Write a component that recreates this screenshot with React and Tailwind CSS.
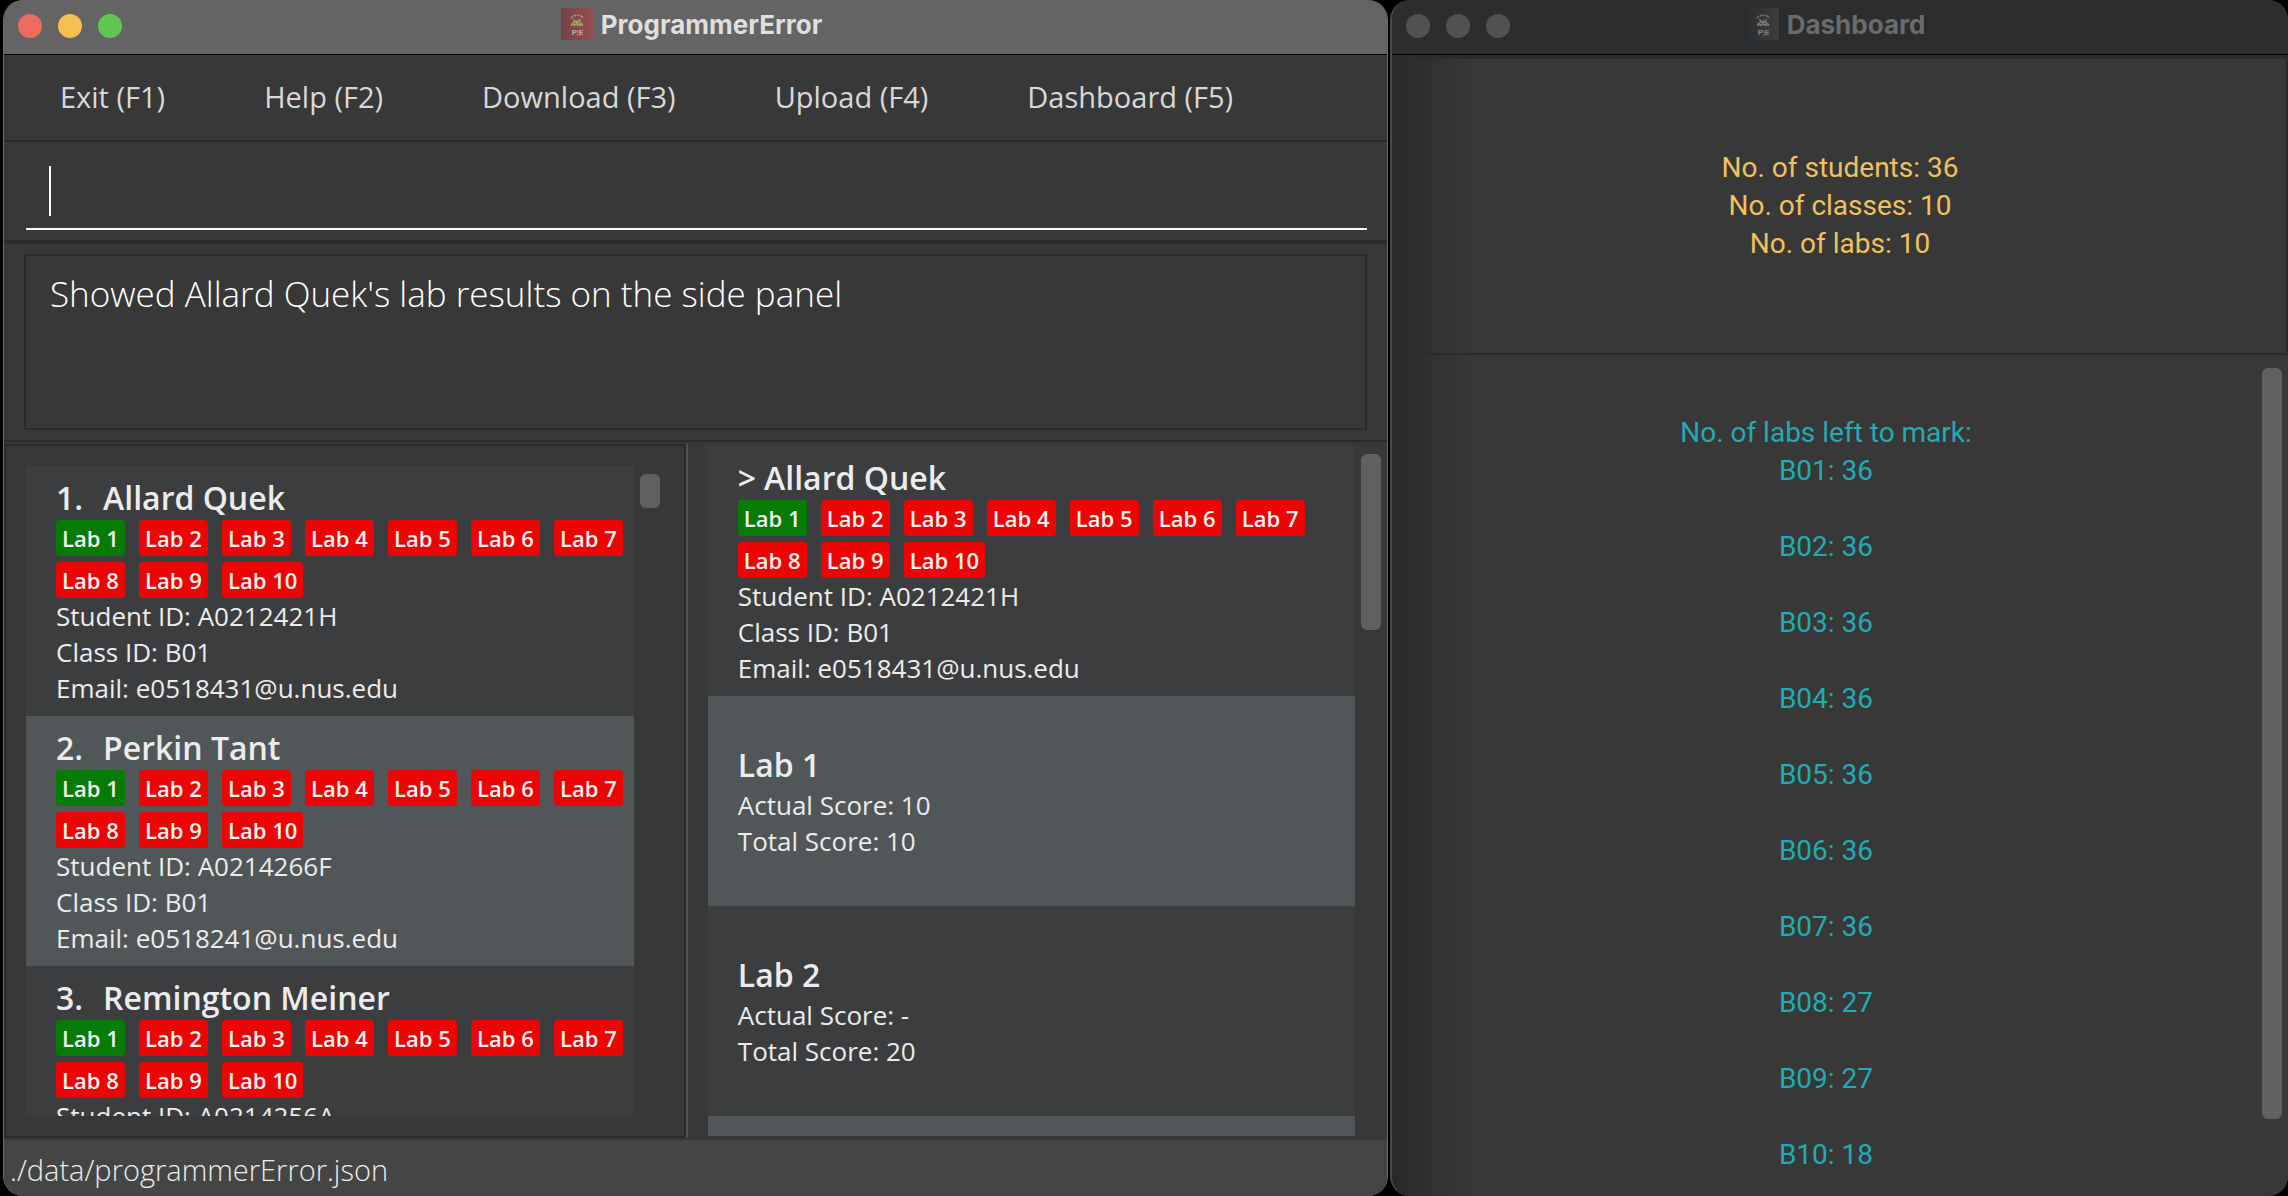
import React from "react";

const STUDENTS = [
  { name: "Allard Quek", id: "A0212421H", classId: "B01", email: "e0518431@u.nus.edu" },
  { name: "Perkin Tant", id: "A0214266F", classId: "B01", email: "e0518241@u.nus.edu" },
  { name: "Remington Meiner", id: "A0214256A" },
];

const LABS = [
  { name: "Lab 1", actual: "10", total: "10" },
  { name: "Lab 2", actual: "-", total: "20" },
];

const TAGS = [1, 2, 3, 4, 5, 6, 7, 8, 9, 10];
const MENU = ["Exit (F1)", "Help (F2)", "Download (F3)", "Upload (F4)", "Dashboard (F5)"];
const UNMARKED = [
  ["B01", 36],
  ["B02", 36],
  ["B03", 36],
  ["B04", 36],
  ["B05", 36],
  ["B06", 36],
  ["B07", 36],
  ["B08", 27],
  ["B09", 27],
  ["B10", 18],
];

function Logo({ id, from, to, alien, ink }) {
  return (
    <svg viewBox="0 0 32 32" className="size-8 shrink-0" aria-hidden="true">
      <defs>
        <linearGradient id={id} x1="0" y1="0" x2="1" y2="0">
          <stop offset="0" stopColor={from} />
          <stop offset="1" stopColor={to} />
        </linearGradient>
      </defs>
      <rect width="32" height="32" fill={`url(#${id})`} />
      <path d="M10 10 Q16 4.5 23 10" fill="none" stroke={ink} strokeWidth="1.6" strokeDasharray="2 1 3 1" opacity="0.75" />
      <path
        fill={alien}
        d="M12 11h1.5v1.5h5V11H20v1.5h-1V14h1.5v1.5H22v2.5h-1.5v-1h-1v1.5H18V17.500h-4v1h-1.500V17h-1v1H10v-2.500h1.500V14H13v-1.500h-1z"
      />
      <path fill={from} d="M13.500 14.500h1V16h-1zM17.500 14.500h1V16h-1z" />
      <text x="16.500" y="26.500" textAnchor="middle" fontSize="8" fontWeight="700" fill={ink} fontFamily="Roboto, sans-serif">
        P|E
      </text>
    </svg>
  );
}

function TitleBar({ title, active, logo }) {
  const dots = active ? ["bg-[#ed6a5e]", "bg-[#f5bf4f]", "bg-[#61c554]"] : ["bg-[#505153]", "bg-[#505153]", "bg-[#505153]"];
  const names = ["Close", "Minimize", "Zoom"];
  return (
    <header
      className={`grid h-[55px] shrink-0 grid-cols-[1fr_auto_1fr] items-start border-b border-black pr-2 ${
        active ? "bg-[#646464]" : "bg-[#2b2d2f]"
      }`}
    >
      <div className="flex gap-4 pt-[14px] pl-[14px]">
        {dots.map((c, i) => (
          <button key={i} type="button" aria-label={names[i]} className={`size-6 rounded-full ${c}`} />
        ))}
      </div>
      <div className="flex items-start gap-2 pt-2">
        {logo}
        <h1
          className={`font-[Inter,sans-serif] text-[26px] leading-[34px] font-bold ${active ? "text-[#dfdfdf]" : "text-[#6a6b6d]"}`}
        >
          {title}
        </h1>
      </div>
    </header>
  );
}

function Tags() {
  return (
    <ul className="flex flex-wrap gap-x-[14px] gap-y-[6px]">
      {TAGS.map((n) => (
        <li
          key={n}
          className={`min-w-[69px] rounded-[4px] px-[6px] text-[22px] leading-9 font-semibold text-[#f2f2f2] ${
            n === 1 ? "bg-[#067c06]" : "bg-[#eb0505]"
          }`}
        >
          Lab {n}
        </li>
      ))}
    </ul>
  );
}

function StudentCard({ student, prefix, highlighted, gap }) {
  return (
    <li className={`h-[250px] shrink-0 pt-[10px] pr-2 pl-[30px] ${highlighted ? "bg-[#515658]" : "bg-[#3c3d3f]"}`}>
      <h2 className={`flex text-[32px] leading-[44px] font-semibold ${gap}`}>
        <span>{prefix}</span>
        <span>{student.name}</span>
      </h2>
      <Tags />
      <p>Student ID: {student.id}</p>
      {student.classId && <p>Class ID: {student.classId}</p>}
      {student.email && <p>Email: {student.email}</p>}
    </li>
  );
}

function MainWindow() {
  return (
    <section className="flex min-h-0 flex-col overflow-hidden rounded-[20px] border-x border-[#6a6a6a] bg-[#383838] font-['Open_Sans',sans-serif] text-[#ececec]">
      <TitleBar
        active
        title="ProgrammerError"
        logo={<Logo id="logo-red" from="#714446" to="#984d50" alien="#9fa452" ink="#c4a5a6" />}
      />
      <nav className="flex h-[85px] shrink-0 items-center gap-[99px] pb-[2px] pl-[56px] text-[29px] text-[#d8d8d8]">
        {MENU.map((m) => (
          <button key={m} type="button" className="whitespace-nowrap">
            {m}
          </button>
        ))}
      </nav>
      <div className="h-[104px] shrink-0 border-t-2 border-b-4 border-[#2b2b2b] pr-5 pl-[22px]">
        <div className="flex h-[88px] items-center border-b-2 border-white pt-3 pl-[23px]">
          <span className="h-[50px] w-[2px] bg-white" />
          <input
            type="text"
            aria-label="Command"
            className="min-w-0 flex-1 bg-transparent text-[35px] font-light text-white outline-none"
          />
        </div>
      </div>
      <div className="h-[198px] shrink-0 border-b-2 border-[#2b2b2b] px-5 pt-[10px]">
        <output className="block h-[176px] border-2 border-[#2b2b2b] px-6 pt-[14px] text-[35px] leading-[48px] font-light text-white">
          Showed Allard Quek's lab results on the side panel
        </output>
      </div>
      <div className="flex min-h-0 flex-1 pt-[2px] pb-[2px] text-[26px] leading-9">
        <div className="flex w-[49.3%] shrink-0 border-2 border-[#2b2b2b] py-5 pr-6 pl-5">
          <ul className="flex min-w-0 flex-1 flex-col overflow-hidden">
            {STUDENTS.map((s, i) => (
              <StudentCard key={s.id} student={s} prefix={`${i + 1}.`} highlighted={i === 1} gap="gap-[20px]" />
            ))}
          </ul>
          <div className="ml-[6px] w-5 pt-2">
            <div className="h-[34px] rounded-[6px] bg-[#606060]" />
          </div>
        </div>
        <div className="flex min-w-0 flex-1 border-l-2 border-[#505050] pt-[2px] pb-[2px] pl-5">
          <div className="flex min-w-0 flex-1 flex-col overflow-hidden bg-[#515658]">
            <ul className="shrink-0">
              <StudentCard student={STUDENTS[0]} prefix=">" gap="gap-[8px]" />
            </ul>
            <ul className="flex min-h-0 flex-1 flex-col">
              {LABS.map((lab, i) => (
                <li
                  key={lab.name}
                  className={`flex h-[210px] shrink-0 flex-col justify-center px-[30px] ${
                    i % 2 === 0 ? "bg-[#515658]" : "bg-[#3c3d3f]"
                  }`}
                >
                  <h3 className="text-[32px] leading-[44px] font-semibold">{lab.name}</h3>
                  <p>Actual Score: {lab.actual}</p>
                  <p>Total Score: {lab.total}</p>
                </li>
              ))}
            </ul>
          </div>
          <div className="mr-[6px] ml-[6px] w-5 pt-2">
            <div className="h-[176px] rounded-[6px] bg-[#606060]" />
          </div>
        </div>
      </div>
      <footer className="flex h-14 shrink-0 items-center bg-[#454545] pt-[3px] pl-[6px] text-[29px] font-light text-[#ececec]">
        ./data/programmerError.json
      </footer>
    </section>
  );
}

function DashboardWindow() {
  return (
    <section className="flex min-h-0 min-w-0 flex-col overflow-hidden rounded-[20px] border-l-2 border-[#4a4a4a] bg-[#383838] text-center font-[Roboto,sans-serif] text-[28px] leading-[38px]">
      <TitleBar
        title="Dashboard"
        logo={<Logo id="logo-gray" from="#2b2d2f" to="#3d3d3e" alien="#757678" ink="#858688" />}
      />
      <div className="flex min-h-0 flex-1 flex-col bg-linear-to-r from-[#292929] to-[#383838] to-[80px]">
        <div className="flex h-[300px] shrink-0 flex-col justify-center border-2 border-t-4 border-[#2b2b2b] text-[#efc15f]">
          <p>No. of students: 36</p>
          <p>No. of classes: 10</p>
          <p>No. of labs: 10</p>
        </div>
        <div className="flex min-h-0 flex-1 pr-[6px]">
          <div className="min-w-0 flex-1 pt-[59px] pr-[2px] text-[#21abb3]">
            <p>No. of labs left to mark:</p>
            <ul className="flex flex-col gap-[38px]">
              {UNMARKED.map(([c, n]) => (
                <li key={c}>
                  {c}: {n}
                </li>
              ))}
            </ul>
          </div>
          <div className="flex w-5 flex-col pt-[13px] pb-[77px]">
            <div className="flex-1 rounded-[6px] bg-[#606060]" />
          </div>
        </div>
      </div>
    </section>
  );
}

export default function App() {
  return (
    <main className="grid h-screen grid-cols-[1385fr_898fr] grid-rows-[minmax(0,1fr)] gap-[2px] overflow-hidden bg-black pl-[3px]">
      <MainWindow />
      <DashboardWindow />
    </main>
  );
}
